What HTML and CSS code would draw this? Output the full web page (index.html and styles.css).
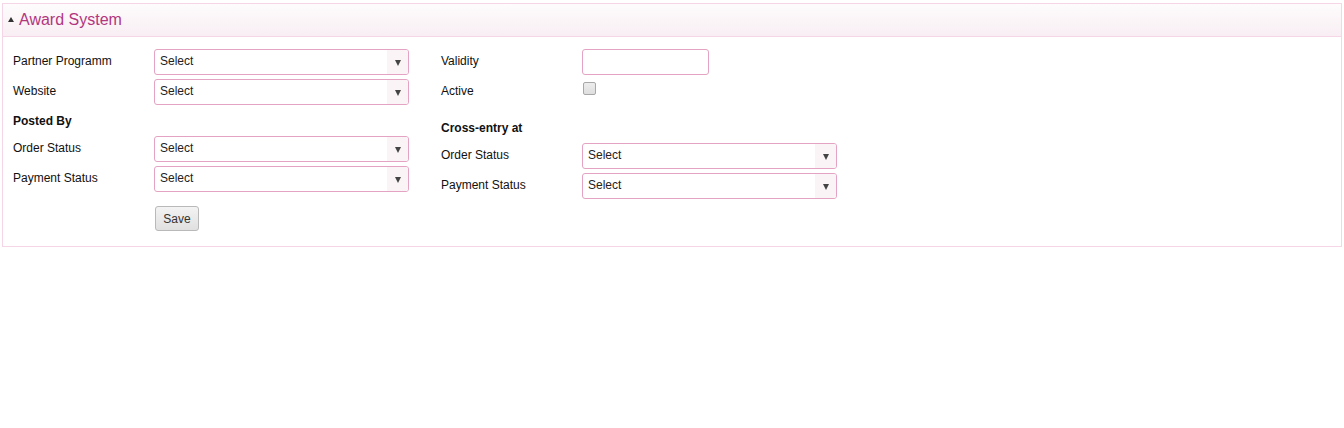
FILE: index.html
```html
<!DOCTYPE html>
<html>
<head>
<meta charset="utf-8">
<link rel="stylesheet" href="styles.css">
</head>
<body>
<div class="panel">
  <div class="panel-head">
    <span class="caret"></span>
    <span class="title">Award System</span>
  </div>
  <div class="panel-body">
    <div class="col">
      <div class="row"><label>Partner Programm</label><div class="select"><span>Select</span><span class="arrow"><i></i></span></div></div>
      <div class="row"><label>Website</label><div class="select"><span>Select</span><span class="arrow"><i></i></span></div></div>
      <div class="heading">Posted By</div>
      <div class="row"><label>Order Status</label><div class="select"><span>Select</span><span class="arrow"><i></i></span></div></div>
      <div class="row"><label>Payment Status</label><div class="select"><span>Select</span><span class="arrow"><i></i></span></div></div>
      <div class="actions"><button class="btn">Save</button></div>
    </div>
    <div class="col">
      <div class="row"><label>Validity</label><div class="text-input"></div></div>
      <div class="row"><label>Active</label><span class="checkbox"></span></div>
      <div class="heading heading-right">Cross-entry at</div>
      <div class="row"><label>Order Status</label><div class="select"><span>Select</span><span class="arrow"><i></i></span></div></div>
      <div class="row"><label>Payment Status</label><div class="select"><span>Select</span><span class="arrow"><i></i></span></div></div>
    </div>
  </div>
</div>
</body>
</html>
```

FILE: styles.css
```css
html, body {
  margin: 0;
  background: #fff;
}
body {
  padding: 3px 2px;
  font-family: "Liberation Sans", Arial, sans-serif;
  font-size: 12px;
  color: #111;
}
.panel {
  border: 1px solid #f4d6e6;
}
.panel-head {
  height: 33px;
  border-bottom: 1px solid #f4d6e6;
  background: linear-gradient(#fefcfd, #f8eef3);
  display: flex;
  align-items: center;
  padding-left: 5px;
  box-sizing: border-box;
}
.caret {
  width: 0;
  height: 0;
  border-left: 3px solid transparent;
  border-right: 3px solid transparent;
  border-bottom: 5px solid #333;
  margin-right: 5px;
  margin-top: -1px;
}
.title {
  font-size: 16px;
  color: #b2367e;
  line-height: 1;
  margin-top: -1px;
}
.panel-body {
  display: flex;
  gap: 32px;
  padding: 12px 10px 15px 10px;
}
.col {
  display: flex;
  flex-direction: column;
  gap: 4px;
}
.row {
  display: flex;
  align-items: center;
  height: 26px;
}
.row label {
  width: 141px;
  flex: none;
  color: #111;
  padding-bottom: 2px;
}
.select {
  width: 255px;
  height: 26px;
  box-sizing: border-box;
  border: 1px solid #e4a3c3;
  border-radius: 3px;
  display: flex;
  align-items: center;
  justify-content: space-between;
  padding-left: 5px;
  overflow: hidden;
  color: #222;
}
.select > span:first-child {
  padding-bottom: 2px;
}
.arrow {
  width: 21px;
  height: 100%;
  background: #faf4f7;
  display: flex;
  align-items: center;
  justify-content: center;
}
.arrow i {
  width: 0;
  height: 0;
  border-left: 3.5px solid transparent;
  border-right: 3.5px solid transparent;
  border-top: 6px solid #444;
  margin-top: 2px;
}
.text-input {
  width: 127px;
  height: 26px;
  box-sizing: border-box;
  border: 1px solid #e4a3c3;
  border-radius: 3px;
}
.checkbox {
  width: 11px;
  height: 11px;
  border: 1px solid #a8a8a8;
  border-radius: 2px;
  background: linear-gradient(#ededed, #dedede);
  margin-left: 1px;
  margin-top: -8px;
}
.heading {
  font-weight: bold;
  height: 23px;
  box-sizing: border-box;
  padding-top: 1px;
  line-height: 22px;
  color: #111;
}
.heading-right {
  margin-top: 7px;
}
.actions {
  padding-left: 142px;
  margin-top: 10px;
}
.btn {
  font-family: "Liberation Sans", Arial, sans-serif;
  font-size: 12px;
  color: #333;
  width: 44px;
  height: 25px;
  border: 1px solid #b9b9b9;
  border-radius: 3px;
  background: linear-gradient(#f3f3f3, #e0e0e0);
  padding: 0;
}
```
